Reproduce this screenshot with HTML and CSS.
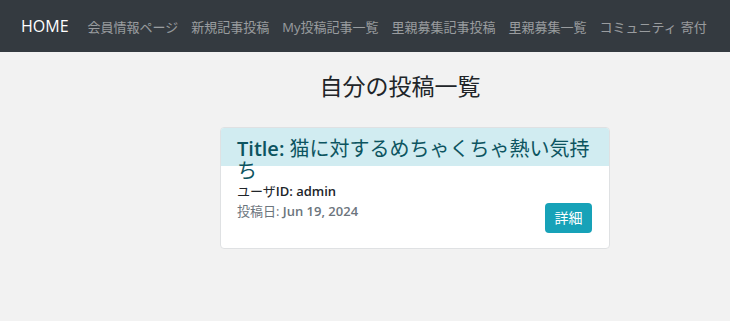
FILE: index.html
```html
<!DOCTYPE html>
<html lang="ja">
<head>
  <meta charset="UTF-8">
  <meta name="viewport" content="width=device-width, initial-scale=1.0">
  <title>自分の投稿一覧</title>
  <link rel="stylesheet" href="styles.css">
</head>
<body>
  <nav class="navbar">
    <a class="brand" href="#">HOME</a>
    <ul class="nav-links">
      <li><a href="#">会員情報ページ</a></li>
      <li><a href="#">新規記事投稿</a></li>
      <li><a href="#">My投稿記事一覧</a></li>
      <li><a href="#">里親募集記事投稿</a></li>
      <li><a href="#">里親募集一覧</a></li>
      <li><a href="#">コミュニティ</a></li>
      <li class="small-gap"><a href="#">寄付</a></li>
    </ul>
  </nav>

  <main class="content">
    <h1 class="page-title">自分の投稿一覧</h1>

    <div class="post-list">
      <div class="card">
        <div class="card-header">
          <h2 class="card-title"><strong>Title:</strong> 猫に対するめちゃくちゃ熱い気持ち</h2>
        </div>
        <div class="card-body">
          <div class="card-info">
            <p class="user-id">ユーザ<b>ID: admin</b></p>
            <p class="post-date">投稿日: <b>Jun 19, 2024</b></p>
          </div>
          <a class="btn-detail" href="#">詳細</a>
        </div>
      </div>
    </div>
  </main>
</body>
</html>
```

FILE: styles.css
```css
body {
  margin: 0;
  font-family: 'Open Sans', 'Noto Sans CJK JP', sans-serif;
  background: #f2f2f2;
  color: #212529;
}

a {
  text-decoration: none;
}

.navbar {
  display: flex;
  align-items: center;
  height: 52px;
  padding: 0 0 0 21px;
  background: #343a40;
  white-space: nowrap;
}

.brand {
  color: #fff;
  font-size: 16px;
}

.nav-links {
  display: flex;
  gap: 13px;
  list-style: none;
  margin: 0 0 0 19px;
  padding: 0;
}

.nav-links a {
  display: block;
  color: rgba(255, 255, 255, 0.5);
  font-size: 13px;
}

.nav-links .small-gap {
  margin-left: -9px;
}

.content {
  padding-top: 18px;
}

.page-title {
  margin: 0 0 25px 0;
  padding-left: 70px;
  text-align: center;
  font-size: 23px;
  font-weight: 400;
  line-height: 32px;
}

.post-list {
  display: flex;
  padding-left: 220px;
}

.card {
  width: 388px;
  background: #fff;
  border: 1px solid #dfe1e3;
  border-radius: 4px;
}

.card-header {
  height: 28px;
  padding: 10px 16px 0 16px;
  background: #d1ecf1;
  border-radius: 3px 3px 0 0;
}

.card-title {
  margin: 0;
  font-size: 20px;
  font-weight: 400;
  line-height: 22px;
  color: #0c5460;
}

.card-title strong {
  font-weight: 600;
}

.card-body {
  display: flex;
  justify-content: space-between;
  align-items: flex-start;
  padding: 16px 17px 15px 16px;
}

.card-info p {
  margin: 0;
  font-size: 13px;
  line-height: 19px;
}

.card-info .post-date {
  margin-top: 1px;
}

.card-info b {
  font-weight: 600;
}

.user-id {
  color: #212529;
}

.post-date {
  color: #6c757d;
}

.btn-detail {
  margin-top: 21px;
  width: 47px;
  height: 30px;
  line-height: 30px;
  text-align: center;
  background: #17a2b8;
  color: #fff;
  font-size: 14px;
  border-radius: 4px;
}
```
